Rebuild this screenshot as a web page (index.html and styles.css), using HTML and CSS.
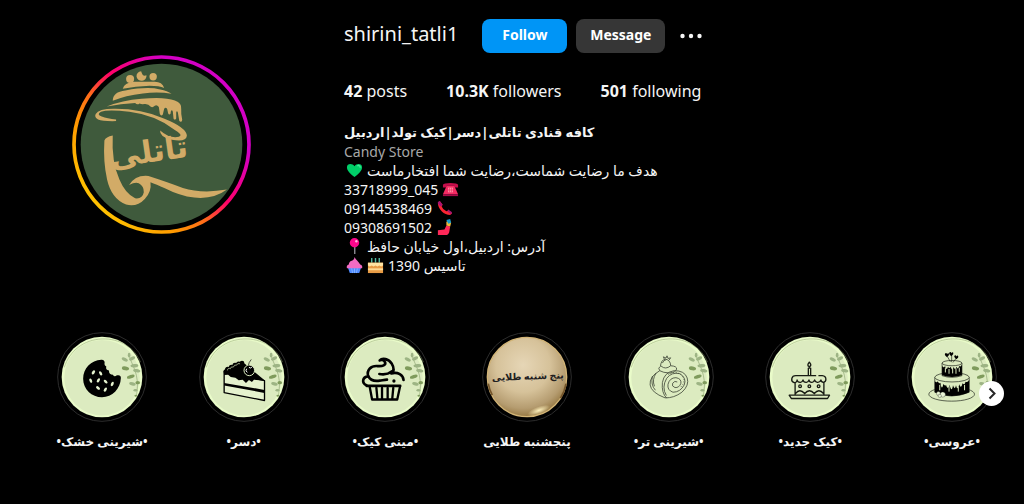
FILE: index.html
```
<!DOCTYPE html>
<html lang="en">
<head>
    <meta charset="UTF-8">
    <meta name="viewport" content="width=device-width, initial-scale=1.0">
    <title>shirini_tatli1</title>
    <link rel="stylesheet" href="styles.css">
</head>
<body>
    <!-- shared drawings -->
    <svg class="defs" aria-hidden="true">
        <defs>
            <linearGradient id="story-ring" x1="0.08" y1="0.85" x2="0.85" y2="0.15">
                <stop offset="0" stop-color="#ffc800"/>
                <stop offset="0.25" stop-color="#ff9a00"/>
                <stop offset="0.42" stop-color="#ff6a1a"/>
                <stop offset="0.58" stop-color="#ff0069"/>
                <stop offset="0.85" stop-color="#d300c5"/>
                <stop offset="1" stop-color="#d300c5"/>
            </linearGradient>
            <radialGradient id="gold" cx="0.45" cy="0.35" r="0.68">
                <stop offset="0" stop-color="#e6d6b6"/>
                <stop offset="0.5" stop-color="#d6c29a"/>
                <stop offset="0.8" stop-color="#b59c70"/>
                <stop offset="1" stop-color="#8f7038"/>
            </radialGradient>
            <radialGradient id="shine">
                <stop offset="0" stop-color="#fff2bd"/>
                <stop offset="1" stop-color="#fff2bd" stop-opacity="0"/>
            </radialGradient>
        </defs>
        <symbol id="plate" viewBox="24 21 272 272">
            <circle cx="160" cy="157" r="134" fill="#000" stroke="#2c2c2c" stroke-width="3"/>
            <circle cx="160" cy="157" r="122" fill="#e9fbc9"/>
            <circle cx="160" cy="159" r="114" fill="#dcebc0"/>
            <path d="M46 128C62 78 105 44 160 42s100 28 116 70" fill="none" stroke="#8c9c70" stroke-width="1.5"/>
            <g fill="none" stroke="#8fa574" stroke-width="2">
                <path d="M242 92c6 22 16 34 22 60 5 22 3 44 0 62"/>
            </g>
            <g fill="#9db484">
                <ellipse cx="229" cy="104" rx="10" ry="5" transform="rotate(25 229 104)"/>
                <ellipse cx="251" cy="101" rx="10" ry="5" transform="rotate(-25 251 101)"/>
                <ellipse cx="242" cy="91" rx="4" ry="7"/>
                <ellipse cx="258" cy="123" rx="12" ry="5" transform="rotate(-5 258 123)"/>
                <ellipse cx="265" cy="138" rx="11" ry="5" transform="rotate(10 265 138)"/>
                <ellipse cx="252" cy="178" rx="10" ry="5" transform="rotate(15 252 178)"/>
                <ellipse cx="261" cy="197" rx="6" ry="4"/>
            </g>
            <g fill="#7f9b5c">
                <ellipse cx="231" cy="131" rx="11" ry="6" transform="rotate(10 231 131)"/>
                <ellipse cx="247" cy="156" rx="12" ry="5" transform="rotate(-18 247 156)"/>
                <ellipse cx="268" cy="174" rx="7" ry="5"/>
                <ellipse cx="262" cy="214" rx="4" ry="3"/>
            </g>
        </symbol>
    </svg>

    <main>
        <section class="profile">
            <a href="#" class="avatar" aria-label="View story">
                <svg viewBox="36 31 536 536">
                    <circle cx="304" cy="299" r="262" fill="none" stroke="url(#story-ring)" stroke-width="11"/>
                    <circle cx="304" cy="299" r="242" fill="#3f5a3c"/>
                    <g fill="#d2ab67">
                        <circle cx="210" cy="103" r="12"/>
                        <path d="M243 80a15 14 0 1 0 16 12q-7 3-11-1-3-4-5-11z"/>
                        <circle cx="279" cy="96" r="11"/>
                        <path d="M188 132q4-18 34-21h62q22 0 28 19-14-7-44-7-42 1-80 9z"/>
                        <path d="M158 168q0-27 38-31 66-12 104-3 22 4 34 13-40-7-86-1-52 6-90 22z"/>
                        <path d="M140 185q46-18 104-23 68-7 100 5 22 8 19 26-1 16 3 32 0 7-5 6-5-1-5-10l-3-18q-3-7-5 0v18q-5 7-8 0l-2-20q-3-8-6-1l-1 7q-4 5-7-1l-3-13q-4-7-9-1l-4 17q-5 7-9-1l-3-21q-6-8-12-4-7 7-12 3-8-10-20-8-8 1-14-2-6 6-13-1-42 2-85 10z"/>
                        <path d="M168 229q-40 1-54-5-12-6-7-16 9-17 59-16 78 0 145 29 68 27 69 52-2 20-45 12-38-9-35-28 28 25 56 19 14-6-11-20-58-45-137-55-64-8-85 0-15 8 2 14 16 6 43 9z"/>
                        <path d="M133 287q4-11 25-15-4 78 20 132 18 43 47 56 22 3 26-18 1-18-15-27-11-4-29 5 19-31 58-27 62 20 103 36 56 18 132 5-40 30-98 24-43-5-88-28-26-12-43-18 4 28-17 50-23 25-56 17-44-17-57-75-12-54-8-117z"/>
                    </g>
                    <text class="logo-text" x="270" y="352" transform="rotate(-8 270 352)" text-anchor="middle" direction="rtl">تاتلی</text>
                </svg>
            </a>

            <div class="info">
                <div class="top-row">
                    <h1>shirini_tatli1</h1>
                    <button class="follow-btn">Follow</button>
                    <button class="message-btn">Message</button>
                    <button class="more-btn" aria-label="Options">
                        <svg viewBox="0 0 22 6"><circle cx="2.5" cy="3" r="2.2"/><circle cx="11" cy="3" r="2.2"/><circle cx="19.5" cy="3" r="2.2"/></svg>
                    </button>
                </div>

                <ul class="stats">
                    <li><strong>42</strong> posts</li>
                    <li><a href="#"><strong>10.3K</strong> followers</a></li>
                    <li><a href="#"><strong>501</strong> following</a></li>
                </ul>

                <div class="bio">
                    <h2 dir="rtl">کافه قنادی تاتلی|دسر|کیک تولد|اردبیل</h2>
                    <p class="category">Candy Store</p>
                    <p dir="rtl"><span>هدف ما رضایت شماست،رضایت شما افتخارماست</span>
                        <svg class="emoji" viewBox="0 0 18 18"><path d="M9 16C4 12 1 9 1 5.500C1 1 7 1 9 4.500C11 1 17 1 17 5.500C17 9 14 12 9 16z" fill="#00ce68"/><path d="M12 4q3-1 3 2" fill="none" stroke="#48e79a" stroke-width="1.500"/></svg>
                    </p>
                    <p><span>33718999_045</span>
                        <svg class="emoji" viewBox="0 0 18 18"><path d="M1 7V4q1-2 8-2t8 2v3h-4V5H5v2z" fill="#c50e4b"/><path d="M5 5h8l4 9H1z" fill="#f52b63"/><path d="M1 14h16v2H1z" fill="#a80a49"/><path d="M6.500 7h5v5h-5z" fill="#ff9aaa"/><path d="M8 7v5M10 7v5M6 9.500h6" stroke="#f52b63" stroke-width=".7"/></svg>
                    </p>
                    <p><span>09144538469</span>
                        <svg class="emoji" viewBox="0 0 18 18"><path d="M2 3q0 5 4 9t9 4l2-2-4-3-2 1q-4-2-5-5l1-2-3-4z" fill="#fa2532"/><path d="M2 2l2-1 3 4-2 2-3-3zM12 12l1-2 4 3-1 2z" fill="#a71473"/></svg>
                    </p>
                    <p><span>09308691502</span>
                        <svg class="emoji" viewBox="0 0 18 18"><path d="M2 17v-5l7-1 2-4 4 1-1 6q-1 3-4 3z" fill="#ff2858"/><path d="M11 7V3l3-2 2 3-1 4z" fill="#efb83a"/><path d="M11 1l4-1 1 4-3 1z" fill="#179cd0"/></svg>
                    </p>
                    <p dir="rtl"><span>آدرس: اردبیل،اول خیابان حافظ</span>
                        <svg class="emoji" viewBox="0 0 18 18"><path d="M8.500 8h1.500v9H8.500z" fill="#8b8b92"/><circle cx="9" cy="5" r="5" fill="#fb078b"/><circle cx="11" cy="3.500" r="1.300" fill="#ffb3dc"/></svg>
                    </p>
                    <p dir="rtl"><span>تاسیس 1390</span>
                        <svg class="emoji" viewBox="0 0 18 18"><path d="M5 1v5M9 1v5M13 1v5" stroke="#51b9a0" stroke-width="1.500"/><path d="M1 6h16v11H1z" fill="#e89b45"/><path d="M1 6h16v3l-2 1-2-1-2 1-2-1-2 1-2-1-2 1-2-1z" fill="#ffe4a3"/><path d="M1 12h16v2H1z" fill="#ffdb94"/></svg>
                        <svg class="emoji" viewBox="0 0 18 18"><path d="M2 11h14l-2 6H4z" fill="#508bff"/><path d="M6 12l1 5M9 12v5M12 12l-1 5" stroke="#83b4ff"/><path d="M9 0q1 2 3 4t3 4q3 1 2 4H1q-1-3 2-4 0-3 3-4t3-4z" fill="#f36bc2"/></svg>
                    </p>
                </div>
            </div>
        </section>

        <section class="highlights">
            <a href="#" class="highlight">
                <svg viewBox="24 21 272 272">
                    <use href="#plate" x="24" y="21" width="272" height="272"/>
                    <path d="M158 105q9-1 10 8-2 9 5 12-3 10 8 12 0 13 12 13 4 8 12 2 12-3 12 8c-1 33-26 58-57 58s-57-24-57-56c0-31 24-55 55-57z"/>
                    <g fill="#e5f2ce">
                        <ellipse cx="134" cy="143" rx="4" ry="7" transform="rotate(35 134 143)"/>
                        <ellipse cx="156" cy="146" rx="4" ry="7" transform="rotate(-30 156 146)"/>
                        <ellipse cx="126" cy="168" rx="4" ry="7" transform="rotate(-20 126 168)"/>
                        <ellipse cx="149" cy="167" rx="4" ry="7" transform="rotate(30 149 167)"/>
                        <ellipse cx="171" cy="171" rx="4" ry="7" transform="rotate(-45 171 171)"/>
                        <ellipse cx="191" cy="178" rx="4" ry="7" transform="rotate(25 191 178)"/>
                        <ellipse cx="148" cy="190" rx="4" ry="7" transform="rotate(-50 148 190)"/>
                        <ellipse cx="170" cy="195" rx="4" ry="7" transform="rotate(30 170 195)"/>
                    </g>
                </svg>
                <span dir="rtl">•شیرینی خشک•</span>
            </a>
            <a href="#" class="highlight">
                <svg viewBox="24 21 272 272">
                    <use href="#plate" x="24" y="21" width="272" height="272"/>
                    <path d="M100 140v64l122 24v-60z" fill="#e5f2ce" stroke="#000" stroke-width="4" stroke-linejoin="round"/>
                    <path d="M98 138l8-8 50-18 68 56-34-3-6 7-9-6-9 9-10-10-12 2-10-8-14-2-8-7-12 1zM100 175l122 21v9l-122-22z"/>
                    <g fill="#000"><circle cx="111" cy="134" r="8"/><circle cx="122" cy="128" r="8"/><circle cx="133" cy="122" r="8"/><circle cx="144" cy="118" r="8"/><circle cx="154" cy="115" r="7"/></g>
                    <path d="M110 137q1-9 9-5 1-8 9-5 2-8 10-6 2-7 10-4" fill="none" stroke="#dcebc0" stroke-width="2"/>
                    <circle cx="176" cy="137" r="16" stroke="#dcebc0" stroke-width="3"/>
                    <path d="M173 123q1-10 9-19" fill="none" stroke="#000" stroke-width="2"/>
                    <path d="M168 132q-5 7 2 11M175 128q5 4 9-1" fill="none" stroke="#fff" stroke-width="3"/>
                </svg>
                <span dir="rtl">•دسر•</span>
            </a>
            <a href="#" class="highlight">
                <svg viewBox="24 21 272 272">
                    <use href="#plate" x="24" y="21" width="272" height="272"/>
                    <g fill="none" stroke="#000" stroke-width="8" stroke-linecap="round" stroke-linejoin="round">
                        <path d="M104 182c-15-6-13-25 5-27-5-20 9-33 29-31 15 1 26-3 22-12-4-7-11-8-16-5 8-9 27-5 36 9 9 15 7 24-1 30 20-5 36 4 37 20"/>
                        <path d="M110 155c6 13 20 15 34 13 8-1 14-3 22-3M143 148c17 3 29-1 37-8M105 184h101"/>
                        <path d="M114 188l7 37h76l8-37M134 190l3 32M151 190v32M168 190v32M185 190l-3 32" stroke-width="7"/>
                    </g>
                    <circle cx="187" cy="169" r="5"/>
                </svg>
                <span dir="rtl">•مینی کیک•</span>
            </a>
            <a href="#" class="highlight">
                <svg viewBox="24 21 272 272">
                    <circle cx="160" cy="157" r="134" fill="#000" stroke="#2c2c2c" stroke-width="3"/>
                    <circle cx="160" cy="157" r="120" fill="url(#gold)" stroke="#d3b577" stroke-width="4"/>
                    <path d="M43 177a118 118 0 0 0 12 35M278 177q-5 26-17 44" fill="none" stroke="#74552b" stroke-width="5"/>
                    <ellipse cx="196" cy="258" rx="36" ry="12" fill="url(#shine)" transform="rotate(-20 196 258)"/>
                    <text class="gold-text" x="163" y="165" text-anchor="middle" direction="rtl" transform="rotate(-2 163 165)">پنج شنبه طلایی</text>
                </svg>
                <span dir="rtl">پنجشنبه طلایی</span>
            </a>
            <a href="#" class="highlight">
                <svg viewBox="24 21 272 272">
                    <use href="#plate" x="24" y="21" width="272" height="272"/>
                    <g fill="none" stroke="#3f4638" stroke-width="2.500" stroke-linejoin="round">
                        <path d="M132 138q-32 18-29 43 3 23 45 39 27 1 51-17 23-21 16-43-8-23-40-22-30 5-35 36-3 31 13 47"/>
                        <path d="M152 213q-15-25 1-52 15-20 40-14 21 13 13 34-12 22-34 22-18-6-15-24 5-20 24-20 17 3 15 17-5 14-18 13-11-4-7-13 6-9 14-4"/>
                        <path d="M132 138q-7-9 2-13 2-20 15-22 16 3 16 20 19 1 18 10-3 10-20 12-22-1-31-7zM136 124q14 12 29-1M140 115q4-10 11-10M146 103l-3-7 8 4 3-7 3 8 8-2-5 7M110 154q-6 27 9 43M121 145q-13 20-5 40"/>
                        <path d="M158 150q18-14 38 0 19 18-1 38" stroke-dasharray="3 5"/>
                    </g>
                </svg>
                <span dir="rtl">•شیرینی تر•</span>
            </a>
            <a href="#" class="highlight">
                <svg viewBox="24 21 272 272">
                    <use href="#plate" x="24" y="21" width="272" height="272"/>
                    <g fill="none" stroke="#171b13" stroke-width="4" stroke-linejoin="round" stroke-linecap="round">
                        <path d="M155 152v-22h7v22M158 130v-4M158 112q-9 11 0 14 9-3 0-14zM187 153h10q11 1 11 11 0 8-7 9-8-1-8-7-3 8-11 7-7-1-8-7-3 8-9 7-7 0-8-7-3 8-9 7-8 0-9-7-3 8-9 7-8 0-9-7-1 9-9 8-9-3-7-12 2-9 12-9h60M115 173v37M202 173v37M97 212h122l-6 10H104zM116 207q13-17 28 0 14-17 29 0 14-17 28 0"/>
                        <circle cx="130" cy="185" r="4"/><circle cx="158" cy="185" r="4"/><circle cx="186" cy="185" r="4"/>
                    </g>
                </svg>
                <span dir="rtl">•کیک جدید•</span>
            </a>
            <a href="#" class="highlight">
                <svg viewBox="24 21 272 272">
                    <use href="#plate" x="24" y="21" width="272" height="272"/>
                    <g fill="#dcebc0" stroke="#171b13" stroke-width="2">
                        <ellipse cx="159" cy="209" rx="69" ry="21"/>
                        <path d="M108 158v45q49 23 104 0v-45z"/><ellipse cx="160" cy="158" rx="52" ry="14"/>
                        <path d="M130 115v38q29 10 60 0v-38z"/><ellipse cx="160" cy="115" rx="30" ry="8"/>
                    </g>
                    <path d="M108 170q6 6 9 0 4 10 8 4 4 27 9 4 6 8 8 3 5 18 11 0 6 26 10 1 6 18 9 0 5 20 10-3 5 17 10-3 6 8 9-5 6 4 11-5v37q-52 23-104 0z"/>
                    <path d="M130 123q5 9 9 1 4 17 9 2 4 8 8 0 5 16 9 1 5 13 8-1 5 12 9-2 4 4 8-4v32q-30 10-60 0z"/>
                    <path d="M140 130v12M151 134v12M162 133v12M172 132v14M182 130v10M123 182v14M151 186v14M179 188v12M198 182v14" stroke="#dcebc0" stroke-width="3" stroke-linecap="round"/>
                    <path d="M146 95l9 16M159 92v20M173 100l-10 13" stroke="#171b13" stroke-width="2"/>
                    <path d="M145 97q-10-8-5-12 4-2 5 3 3-5 6-1 2 4-6 10zM158 94q-10-8-5-12 4-2 5 3 3-5 6-1 2 4-6 10zM173 103q-9-7-5-11 4-2 5 3 3-5 6-1 2 4-6 9z"/>
                    <g fill="#e8f3d5" stroke="#171b13"><circle cx="119" cy="207" r="6"/><circle cx="132" cy="210" r="8"/><circle cx="123" cy="214" r="5"/></g>
                </svg>
                <span dir="rtl">•عروسی•</span>
            </a>
            <button class="next-btn" aria-label="Next">
                <svg viewBox="0 0 25 25"><path d="M10.500 7.500l5 5-5 5" fill="none" stroke="#262626" stroke-width="2"/></svg>
            </button>
        </section>
    </main>
</body>
</html>
```

FILE: styles.css
```
* {
    box-sizing: border-box;
}
body {
    margin: 0;
    background-color: #000;
    color: #f5f5f5;
    font-family: "Noto Sans", "DejaVu Sans", sans-serif;
    font-size: 14px;
}
h1, h2, p, ul {
    margin: 0;
    padding: 0;
}
a {
    color: inherit;
    text-decoration: none;
}
button {
    border: none;
    padding: 0;
    font-family: inherit;
    cursor: pointer;
}
svg {
    display: block;
}
.defs {
    position: absolute;
    width: 0;
    height: 0;
}
.profile {
    display: grid;
    grid-template-columns: 1fr 2fr;
    gap: 22px;
    padding: 19px 36px 0 0;
}
.avatar {
    justify-self: center;
    align-self: start;
    margin-top: 36px;
}
.avatar svg {
    width: 179px;
    height: 179px;
}
.logo-text {
    fill: #d2ab67;
    font-family: "Noto Sans", "DejaVu Sans", sans-serif;
    font-weight: bold;
    font-size: 92px;
}
.top-row {
    display: flex;
    align-items: center;
    height: 34px;
}
h1 {
    margin-right: 24px;
    padding-bottom: 4px;
    font-size: 20px;
    font-weight: normal;
    line-height: 30px;
}
.follow-btn, .message-btn {
    height: 34px;
    padding-bottom: 4px;
    border-radius: 8px;
    color: #fff;
    font-size: 14px;
    font-weight: bold;
}
.follow-btn {
    width: 85px;
    margin-right: 9px;
    background-color: #0095f6;
}
.message-btn {
    width: 89px;
    margin-right: 15px;
    background-color: #363636;
}
.more-btn {
    background: none;
}
.more-btn svg {
    width: 22px;
    height: 6px;
    fill: #f5f5f5;
}
.stats {
    display: flex;
    gap: 39px;
    margin-top: 26px;
    list-style: none;
    font-size: 16px;
    line-height: 24px;
}
.bio {
    margin-top: 19px;
    line-height: 19px;
}
h2 {
    font-size: 13px;
    line-height: 20px;
    text-align: left;
}
.bio p {
    display: flex;
    align-items: center;
    justify-content: flex-start;
    gap: 4px;
    height: 19px;
    white-space: nowrap;
}
.bio p[dir="rtl"] {
    justify-content: flex-end;
    padding-left: 2px;
}
.bio .category {
    color: #a8a8a8;
}
.emoji {
    width: 17px;
    height: 17px;
}
.highlights {
    position: relative;
    display: flex;
    justify-content: space-between;
    margin-top: 57px;
    padding: 0 27px 0 57px;
}
.highlight {
    display: flex;
    flex-direction: column;
    align-items: center;
    gap: 10px;
    width: 90px;
    font-size: 12px;
    font-weight: bold;
    line-height: 20px;
    white-space: nowrap;
}
.highlight svg {
    width: 90px;
    height: 90px;
}
.gold-text {
    fill: #22201f;
    font-size: 29px;
    font-weight: bold;
}
.next-btn {
    position: absolute;
    top: 49px;
    right: 20px;
    width: 25px;
    height: 25px;
    border-radius: 50%;
    background-color: #fff;
}
.next-btn svg {
    width: 25px;
    height: 25px;
}
```
